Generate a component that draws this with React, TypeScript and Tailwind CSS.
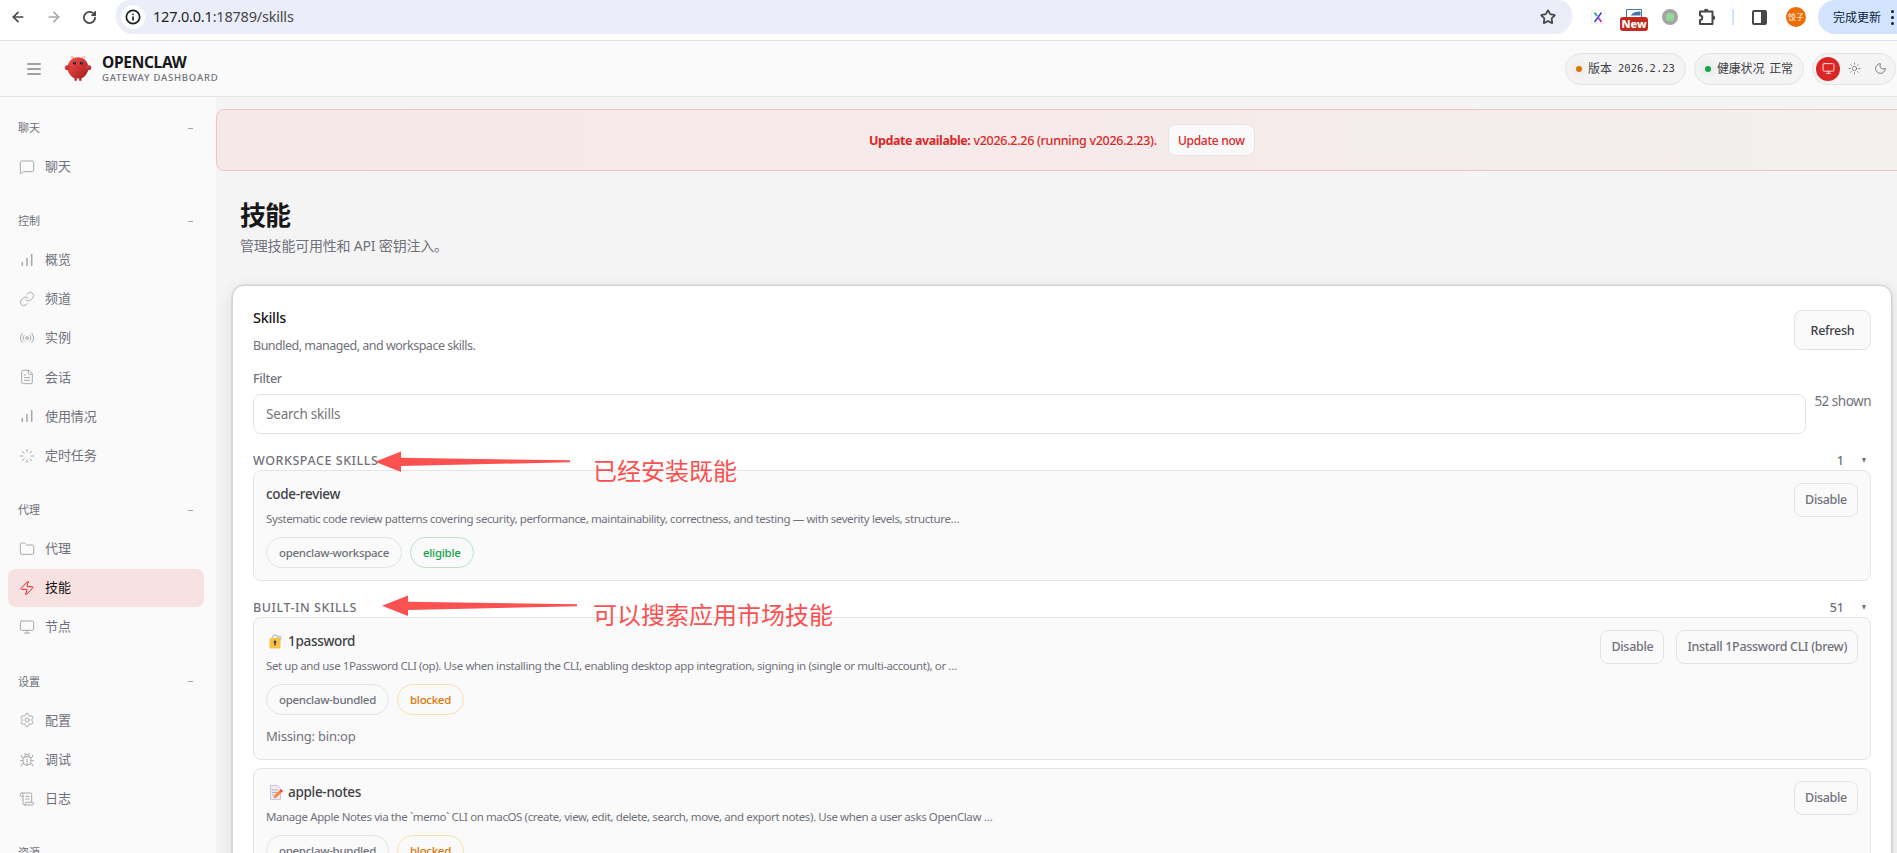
import React from 'react';
import {
  ArrowLeft,
  ArrowRight,
  Bug,
  FileText,
  Folder,
  Info,
  Link,
  Loader,
  MessageSquare,
  Monitor,
  Moon,
  Radio,
  RotateCw,
  ScrollText,
  Settings,
  Star,
  Sun,
  Zap,
} from 'lucide-react';
import clsx from 'clsx';

function BarsIcon() {
  return (
    <svg viewBox="0 0 24 24" className="h-4 w-4" fill="none" stroke="currentColor" strokeWidth="2.4" strokeLinecap="round">
      <path d="M5 20v-4M12 20V10M19 20V4" />
    </svg>
  );
}

const icon = 'h-4 w-4';

const groups = [
  { label: '聊天', items: [{ text: '聊天', icon: <MessageSquare className={icon} strokeWidth={1.5} /> }] },
  {
    label: '控制',
    items: [
      { text: '概览', icon: <BarsIcon /> },
      { text: '频道', icon: <Link className={icon} strokeWidth={1.5} /> },
      { text: '实例', icon: <Radio className={icon} strokeWidth={1.5} /> },
      { text: '会话', icon: <FileText className={icon} strokeWidth={1.5} /> },
      { text: '使用情况', icon: <BarsIcon /> },
      { text: '定时任务', icon: <Loader className={icon} strokeWidth={1.5} /> },
    ],
  },
  {
    label: '代理',
    items: [
      { text: '代理', icon: <Folder className={icon} strokeWidth={1.5} /> },
      { text: '技能', icon: <Zap className={icon} strokeWidth={1.5} />, active: true },
      { text: '节点', icon: <Monitor className={icon} strokeWidth={1.5} /> },
    ],
  },
  {
    label: '设置',
    items: [
      { text: '配置', icon: <Settings className={icon} strokeWidth={1.5} /> },
      { text: '调试', icon: <Bug className={icon} strokeWidth={1.5} /> },
      { text: '日志', icon: <ScrollText className={icon} strokeWidth={1.5} /> },
    ],
  },
  { label: '资源', items: [] },
];

function BrowserBar() {
  return (
    <div className="flex h-[41px] shrink-0 items-start border-b border-[#e0e0e0] bg-white">
      <div className="flex h-[34px] w-[116px] shrink-0 items-center gap-[20px] pl-[10px] text-[#474747]">
        <ArrowLeft className="h-4 w-4" strokeWidth={2.6} />
        <ArrowRight className="h-4 w-4 text-[#aaaaaa]" strokeWidth={2.6} />
        <RotateCw className="h-[15px] w-[15px]" strokeWidth={2.8} />
      </div>
      <div className="flex h-[34px] w-[1456px] shrink-0 items-center rounded-b-[17px] rounded-tl-[14px] rounded-tr-[14px] bg-[#ebeef8] pl-[5px] pr-4">
        <span className="flex h-6 w-6 items-center justify-center rounded-full bg-white">
          <Info className="h-4 w-4 text-[#202124]" strokeWidth={2.6} />
        </span>
        <span className="ml-2 text-[14.5px] tracking-[-0.2px] text-[#1f1f1f]">
          127.0.0.1<span className="text-[#474747]">:18789/skills</span>
        </span>
        <Star className="ml-auto h-4 w-4 text-[#474747]" strokeWidth={2.6} />
      </div>
      <div className="flex h-[34px] min-w-0 flex-1 items-center">
        <svg width="14" height="14" viewBox="0 0 14 14" className="ml-[19px] shrink-0" fill="none" strokeWidth="2">
          <rect x="0.5" y="0.5" width="13" height="13" stroke="#f1f1f1" strokeWidth="1" />
          <path d="M3.500 2.500L6 6" stroke="#35a88a" />
          <path d="M10.500 2.500L3.500 12" stroke="#3b49c8" strokeWidth="1.600" />
          <path d="M7.500 8L10.500 12" stroke="#c536c0" />
        </svg>
        <svg width="28" height="34" viewBox="0 0 28 34" className="ml-[15px] shrink-0">
          <path d="M6.500 17V9.500h15V17" fill="#fff" stroke="#4179ae" />
          <path d="M11 15.500c1-3 5-4 9.500-4V15.500z" fill="#4179ae" />
          <rect x="0" y="17" width="28" height="14" rx="3" fill="#c5281c" />
          <text x="14" y="28" textAnchor="middle" fontSize="11" fontWeight="800" fill="#fff" fontFamily="Noto Sans">
            New
          </text>
        </svg>
        <span className="ml-[14px] flex h-4 w-4 shrink-0 items-center justify-center rounded-full bg-[#a5a5a5]">
          <span className="h-2 w-2 rounded-[3px] bg-[#93db93]" />
        </span>
        <svg width="18" height="18" viewBox="0 0 18 18" className="ml-[20px] shrink-0" fill="none" stroke="#474747" strokeWidth="2">
          <path d="M2 3.500h12.500v12.500H2v-4a2.200 2.200 0 0 0 0-4.500z" strokeLinejoin="round" />
          <path d="M6 3a2.200 2.200 0 0 1 4.400 0zM15 7.500a2.200 2.200 0 0 1 0 4.400z" fill="#474747" stroke="none" />
        </svg>
        <span className="ml-[16px] h-4 w-[2px] shrink-0 bg-[#d3e3fd]" />
        <svg width="15" height="15" viewBox="0 0 15 15" className="ml-[18px] shrink-0">
          <rect x="1" y="1" width="13" height="13" rx="1" fill="none" stroke="#474747" strokeWidth="2" />
          <path d="M9 1h5v13H9z" fill="#474747" />
        </svg>
        <span className="ml-[19px] flex h-5 w-5 shrink-0 items-center justify-center rounded-full bg-[#ee6c02] text-[8px] text-white">
          饺子
        </span>
        <div className="ml-[12px] flex h-[34px] flex-1 items-center rounded-bl-[17px] rounded-tl-[17px] bg-[#d3e3fd] pl-[15px] text-[12px] text-[#0b1c41]">
          <span className="pt-[2px]">完成更新</span>
          <span className="ml-[10px] flex flex-col gap-[3px]">
            <i className="h-[3px] w-[3px] rounded-full bg-[#0b1c41]" />
            <i className="h-[3px] w-[3px] rounded-full bg-[#0b1c41]" />
            <i className="h-[3px] w-[3px] rounded-full bg-[#0b1c41]" />
          </span>
        </div>
      </div>
    </div>
  );
}

function Logo() {
  return (
    <svg width="28" height="28" viewBox="0 0 120 120" fill="none">
      <defs>
        <linearGradient id="claw" x1="0" y1="0" x2="1" y2="1">
          <stop offset="0" stopColor="#ff4d4d" />
          <stop offset="1" stopColor="#991b1b" />
        </linearGradient>
      </defs>
      <path
        d="M60 10C30 10 15 35 15 55C15 75 30 95 45 100V110H55V100C55 100 60 102 65 100V110H75V100C90 95 105 75 105 55C105 35 90 10 60 10Z"
        fill="url(#claw)"
      />
      <path d="M20 45C5 40 0 50 5 60C10 70 20 65 25 55C28 48 25 45 20 45Z" fill="url(#claw)" />
      <path d="M100 45C115 40 120 50 115 60C110 70 100 65 95 55C92 48 95 45 100 45Z" fill="url(#claw)" />
      <path d="M45 15Q35 5 30 8M75 15Q85 5 90 8" stroke="#ff4d4d" strokeWidth="3" strokeLinecap="round" />
      <circle cx="45" cy="35" r="6" fill="#050810" />
      <circle cx="75" cy="35" r="6" fill="#050810" />
      <circle cx="46" cy="34" r="2.500" fill="#00e5cc" />
      <circle cx="76" cy="34" r="2.500" fill="#00e5cc" />
    </svg>
  );
}

function Topbar() {
  return (
    <header className="flex h-14 shrink-0 items-center border-b border-[#e4e4e7] bg-[#fafafa]">
      <div className="ml-[27px] flex w-[14px] flex-col gap-[3px] pt-px">
        <i className="h-[2px] rounded-full bg-[#a1a1aa]" />
        <i className="h-[2px] rounded-full bg-[#a1a1aa]" />
        <i className="h-[2px] rounded-full bg-[#a1a1aa]" />
      </div>
      <div className="ml-[23px]">
        <Logo />
      </div>
      <div className="ml-[10px] flex flex-col pt-px">
        <span className="text-[15.500px] leading-[17px] font-bold tracking-[-0.3px] text-[#18181b]">OPENCLAW</span>
        <span className="text-[9.500px] leading-[13px] font-medium tracking-[0.770px] text-[#71717a]">GATEWAY DASHBOARD</span>
      </div>
      <div className="ml-auto flex items-center gap-2 pr-px text-[#3f3f46]">
        <div className="flex h-8 w-[121px] items-center rounded-full border border-[#e4e4e7] bg-[#f4f4f5] pl-[10px]">
          <i className="h-[6px] w-[6px] rounded-full bg-[#d97706] shadow-[0_0_8px_rgba(217,119,6,0.35)]" />
          <span className="ml-[6px] text-[12px]">版本</span>
          <span className="ml-[6px] pt-px font-['DejaVu_Sans_Mono','Liberation_Mono',monospace] text-[10.500px]">
            2026.2.23
          </span>
        </div>
        <div className="flex h-8 w-[110px] items-center rounded-full border border-[#e4e4e7] bg-[#f4f4f5] pl-[10px]">
          <i className="h-[6px] w-[6px] rounded-full bg-[#16a34a] shadow-[0_0_8px_rgba(22,163,74,0.35)]" />
          <span className="ml-[6px] text-[12px] tracking-[-0.2px]">健康状况</span>
          <span className="ml-[5px] pt-px text-[12px] tracking-[-0.2px]">正常</span>
        </div>
        <div className="flex h-8 w-[84px] items-center gap-[2px] rounded-full border border-[#e4e4e7] bg-[#f4f4f5] pl-[3px] text-[#71717a]">
          <span className="flex h-6 w-6 items-center justify-center rounded-full bg-[#dc2626] text-white">
            <Monitor className="h-[13px] w-[13px]" strokeWidth={1.5} />
          </span>
          <span className="flex h-6 w-6 items-center justify-center">
            <Sun className="h-[13px] w-[13px]" strokeWidth={1.5} />
          </span>
          <span className="flex h-6 w-6 items-center justify-center">
            <Moon className="h-[13px] w-[13px]" strokeWidth={1.700} />
          </span>
        </div>
      </div>
    </header>
  );
}

function Sidebar() {
  return (
    <nav className="flex w-[216px] shrink-0 flex-col overflow-hidden bg-[#fafafa] px-2 pt-[21px]">
      {groups.map((group) => (
        <div key={group.label} className="mb-[24.500px] shrink-0">
          <div className="mb-[9.500px] flex h-5 items-center justify-between pr-[15px] pl-[10px] text-[11px] text-[#71717a]">
            {group.label}
            <i className="h-px w-[5px] bg-[#a1a1aa]" />
          </div>
          {group.items.map((item) => (
            <div
              key={item.text}
              className={clsx(
                'mb-[1.200px] flex h-[38px] w-[196px] items-center gap-[10px] rounded-lg pl-[11px] text-[13px]',
                item.active ? 'bg-[#f8e1e1] text-[#18181b]' : 'text-[#71717a]',
              )}
            >
              <span className={item.active ? 'text-[#dc2626]' : 'text-[#a9a9ae]'}>{item.icon}</span>
              <span className="tracking-[-0.1px]">{item.text}</span>
            </div>
          ))}
        </div>
      ))}
    </nav>
  );
}

function LockEmoji() {
  return (
    <svg width="15" height="15" viewBox="0 0 15 15">
      <path d="M3.500 5V3.500a2.500 2.500 0 0 1 5 0V5" fill="none" stroke="#c8c5cc" strokeWidth="1.500" />
      <path d="M9 4.500a2 2 0 1 1 3.500 0l-1.500 3-1 3z" fill="#cfccd4" />
      <rect x="0.500" y="4" width="11" height="10.500" rx="1.500" fill="#f9c23c" />
      <circle cx="6" cy="8" r="1.400" fill="#433b6b" />
      <path d="M5.300 8h1.400v3.500H5.300z" fill="#433b6b" />
    </svg>
  );
}

function MemoEmoji() {
  return (
    <svg width="15" height="15" viewBox="0 0 15 15">
      <path d="M1.500 0.500h7l3 3v11h-10z" fill="#f0eaf6" stroke="#cdc4d6" />
      <path d="M3 5h6M3 7.500h6M3 10h4" stroke="#b4acbc" strokeWidth="1.200" />
      <path d="M4.500 13.500l1-3 5-5 2 2-5 5z" fill="#ff822d" />
      <path d="M10.500 5.500l1.500-1.300 2 2-1.500 1.300z" fill="#f8312f" />
    </svg>
  );
}

function Chip({ children, tone = 'plain' }: { children: React.ReactNode; tone?: string }) {
  return (
    <span
      className={clsx(
        'flex h-[31px] items-center rounded-full border px-[12px] text-[11.500px] font-medium tracking-[-0.3px]',
        tone === 'plain' && 'border-[#e4e4e7] text-[#71717a]',
        tone === 'ok' && 'border-[#b9e3c8] text-[#16a34a]',
        tone === 'warn' && 'border-[#fbdfae] text-[#d97706]',
      )}
    >
      {children}
    </span>
  );
}

function SmallButton({ children }: { children: React.ReactNode }) {
  return (
    <button className="h-[34px] rounded-lg border border-[#e4e4e7] bg-[#fafafa] px-[10px] pt-px text-[12.500px] font-medium tracking-[-0.3px] whitespace-nowrap text-[#71717a]">
      {children}
    </button>
  );
}

type SkillProps = {
  name: string;
  text: string;
  source: string;
  status: string;
  tone: string;
  emoji?: React.ReactNode;
  missing?: string;
  install?: string;
};

function Skill({ name, text, source, status, tone, emoji, missing, install }: SkillProps) {
  return (
    <div className="flex items-start rounded-lg border border-[#e4e4e7] bg-[#fafafa] p-3">
      <div className="flex flex-1 flex-col">
        <div className="flex h-[22px] items-center text-[13.500px] font-medium tracking-[-0.3px] text-[#3f3f46]">
          {emoji && <span className="mr-[4px] ml-[3px]">{emoji}</span>}
          {name}
        </div>
        <div className="mt-[5px] h-[18px] text-[11.500px] leading-[18px] tracking-[-0.4px] text-[#71717a]">{text}</div>
        <div className="mt-[9px] flex gap-2">
          <Chip>{source}</Chip>
          <Chip tone={tone}>{status}</Chip>
        </div>
        {missing && (
          <div className="mt-[11px] mb-px h-5 text-[13px] leading-5 tracking-[-0.2px] text-[#71717a]">{missing}</div>
        )}
      </div>
      <div className="flex gap-3">
        <SmallButton>Disable</SmallButton>
        {install && <SmallButton>{install}</SmallButton>}
      </div>
    </div>
  );
}

function GroupTitle({ title, count }: { title: string; count: number }) {
  return (
    <div className="flex h-5 items-center pt-[2px] pr-[5px] text-[12.500px] font-medium tracking-[0.550px] text-[#71717a]">
      {title}
      <span className="ml-auto tracking-normal">{count}</span>
      <i className="mb-px ml-[18px] border-x-[2.500px] border-t-[5px] border-x-transparent border-t-[#71717a]" />
    </div>
  );
}

// hand-drawn note: arrow pointing left with a caption beside it
function Note({ text, arrow, caption }: { text: string; arrow: string; caption: string }) {
  return (
    <>
      <svg width="196" height="22" viewBox="0 0 196 22" className={clsx('absolute', arrow)}>
        <path d="M0 10.800L26 0.500V6.800L195 9.300V11.300L26 15V21z" fill="#fb5151" />
      </svg>
      <span className={clsx('absolute text-[24px] leading-8 whitespace-nowrap text-[#fb5151]', caption)}>{text}</span>
    </>
  );
}

export default function App() {
  return (
    <div className="relative flex h-[853px] w-[1897px] flex-col overflow-hidden bg-[#f4f4f5] font-['Noto_Sans','Noto_Sans_CJK_SC',sans-serif]">
      <BrowserBar />
      <Topbar />
      <div className="flex min-h-0 flex-1">
        <Sidebar />
        <main className="flex min-w-0 flex-1 flex-col overflow-hidden pt-3">
          <div className="-mr-4 flex h-[62px] shrink-0 items-center rounded-lg border border-[#f5c2c4] bg-linear-to-r from-[#f5e8e8] via-[#f6eaea] to-[#f2f0ef] pl-[652px] text-[12.500px] font-medium tracking-[-0.280px] text-[#dc2626]">
            <span className="pt-[2px]">
              <b className="font-bold tracking-[-0.420px]">Update available:</b> v2026.2.26 (running v2026.2.23).
            </span>
            <button className="ml-[11px] h-8 w-[87px] rounded-lg border border-[#e4e4e7] bg-[#fafafa] pt-[2px] text-[12px] font-medium">
              Update now
            </button>
          </div>
          <div className="mt-[25px] shrink-0 pl-6">
            <h1 className="text-[26px] leading-[38px] font-bold tracking-[-0.9px] text-[#18181b]">技能</h1>
            <p className="pt-px text-[14px] leading-[22px] tracking-[-0.2px] text-[#71717a]">管理技能可用性和 API 密钥注入。</p>
          </div>
          <section className="mt-[28px] mr-[5px] ml-4 h-[700px] shrink-0 rounded-xl border border-[#d4d4d6] bg-white px-5 pt-6 shadow-[0_0_0_1px_rgba(0,0,0,0.06),0_4px_16px_rgba(0,0,0,0.1)]">
            <div className="flex h-[58px] items-start justify-between">
              <div>
                <div className="-mt-[4px] text-[14.500px] leading-[22px] font-medium tracking-[-0.3px] text-[#18181b]">Skills</div>
                <div className="mt-[8px] text-[12.500px] leading-5 tracking-[-0.5px] text-[#71717a]">
                  Bundled, managed, and workspace skills.
                </div>
              </div>
              <button className="h-10 w-[77px] rounded-lg border border-[#e4e4e7] bg-[#fafafa] pt-[2px] text-[12.500px] font-medium tracking-[-0.250px] text-[#3f3f46]">
                Refresh
              </button>
            </div>
            <div className="flex h-[82px] items-start">
              <div className="flex flex-1 flex-col gap-[6px]">
                <span className="h-5 pt-px text-[12.500px] leading-5 font-medium tracking-[-0.3px] text-[#71717a]">Filter</span>
                <div className="flex h-10 items-center rounded-lg border border-[#e4e4e7] px-3 pt-px text-[13.500px] tracking-[-0.2px] text-[#757575]">
                  Search skills
                </div>
              </div>
              <span className="mt-[23px] ml-[8.500px] text-[13.500px] leading-5 tracking-[-0.5px] text-[#71717a]">52 shown</span>
            </div>
            <GroupTitle title="WORKSPACE SKILLS" count={1} />
            <Skill
              name="code-review"
              text="Systematic code review patterns covering security, performance, maintainability, correctness, and testing — with severity levels, structure…"
              source="openclaw-workspace"
              status="eligible"
              tone="ok"
            />
            <div className="h-4" />
            <GroupTitle title="BUILT-IN SKILLS" count={51} />
            <div className="flex flex-col gap-2">
              <Skill
                name="1password"
                emoji={<LockEmoji />}
                text="Set up and use 1Password CLI (op). Use when installing the CLI, enabling desktop app integration, signing in (single or multi-account), or …"
                source="openclaw-bundled"
                status="blocked"
                tone="warn"
                missing="Missing: bin:op"
                install="Install 1Password CLI (brew)"
              />
              <Skill
                name="apple-notes"
                emoji={<MemoEmoji />}
                text="Manage Apple Notes via the `memo` CLI on macOS (create, view, edit, delete, search, move, and export notes). Use when a user asks OpenClaw …"
                source="openclaw-bundled"
                status="blocked"
                tone="warn"
                missing="Missing: bin:memo"
              />
            </div>
          </section>
        </main>
      </div>
      <Note text="已经安装既能" arrow="top-[451px] left-[375px]" caption="top-[455px] left-[593px]" />
      <Note text="可以搜索应用市场技能" arrow="top-[595px] left-[382px]" caption="top-[599px] left-[593px]" />
    </div>
  );
}
